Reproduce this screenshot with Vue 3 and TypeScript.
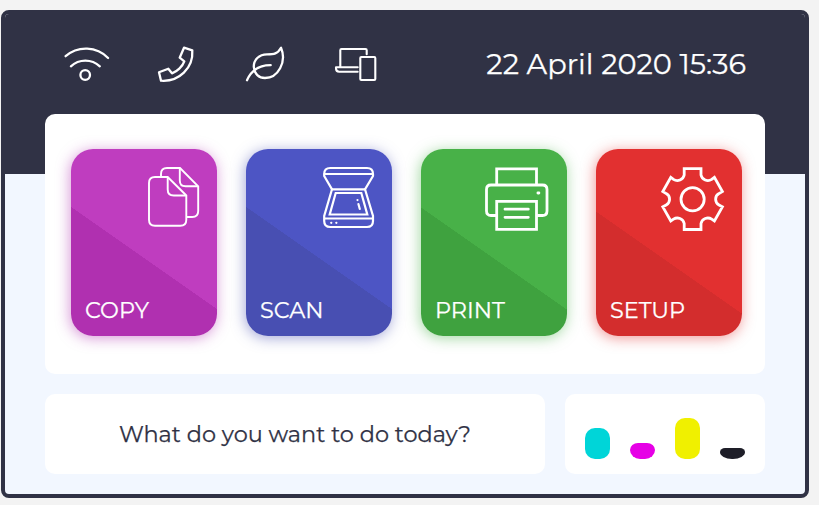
<script setup lang="ts">
interface Tile {
  id: string
  label: string
}
interface Ink {
  id: string
  level: number
}

const tiles: Tile[] = [
  { id: 'copy', label: 'COPY' },
  { id: 'scan', label: 'SCAN' },
  { id: 'print', label: 'PRINT' },
  { id: 'setup', label: 'SETUP' },
]

const inks: Ink[] = [
  { id: 'cyan', level: 31 },
  { id: 'magenta', level: 16 },
  { id: 'yellow', level: 41 },
  { id: 'black', level: 11 },
]
</script>

<template>
  <main class="printer">
    <header class="top">
      <nav class="status">
        <svg viewBox="0 0 48 48">
          <path d="M4.6 15.2A31 31 0 0 1 47.1 17M9.9 25.3A21 21 0 0 1 38.8 25.3" />
          <circle cx="24.2" cy="34" r="4.8" />
        </svg>
        <svg viewBox="0 0 48 48">
          <path d="M33 6.7L41.3 9.3C42.5 27 28 41 10 39.7L8 31.3L17.3 27.7L21 32.3C26 30.5 31.5 25.5 33.3 20.3L28.7 16.7Z" />
        </svg>
        <svg viewBox="0 0 48 48">
          <path d="M40 6.7C36.5 13 33 13.3 26 13.3C18 13.3 12.5 19 12.8 26C13.2 33 18 37 24 37C37 37 46 21 40 6.7ZM6 39.2C10 30 18 24.2 29.7 24.2" />
        </svg>
        <svg class="devices" viewBox="0 0 48 48">
          <path d="M9.3 26.3V9.2Q9.3 8 10.5 8H34.5Q35.7 8 35.7 9.2V13.2M26.7 26.3H5V27.5Q5 30.7 8.2 30.7H26.7" />
          <rect x="29.3" y="16" width="15" height="23" rx="1" />
        </svg>
      </nav>
      <time class="date">22 April 2020 15:36</time>
    </header>

    <section class="actions">
      <button v-for="tile in tiles" :key="tile.id" class="tile" :class="tile.id">
        <svg class="icon" viewBox="0 0 64 64">
          <g v-if="tile.id === 'copy'">
            <path d="M26 9.5V7Q26 1 32 1H45L63.2 19.3V44Q63.2 50 57.2 50H52" />
            <path d="M44.8 1V13.5Q44.8 19.3 50.6 19.3H63" />
            <path d="M32.7 10H20Q14 10 14 16V52.7Q14 58.8 20 58.8H45.3Q51.3 58.8 51.3 52.7V28.5Z" />
            <path d="M32.7 10V22.5Q32.7 28.5 38.7 28.5H51" />
          </g>
          <g v-else-if="tile.id === 'scan'">
            <path d="M14.2 7Q14.2 1 20.2 1H57Q63 1 63 7V9L55 22.3H22L14.2 9Z" />
            <path d="M14.5 7H62.7M22 22.3L14.2 49V54Q14.2 60 20.2 60H57Q63 60 63 54V49L55 22.3M14.3 51.5H62.9" />
            <path d="M25.7 26H51.3L57.3 47.5H19.7Z" />
            <path d="M47.5 33V33.1M48.4 37L49.8 42M21.2 55.8H21.3M26.3 55.8H26.4" />
          </g>
          <g v-else-if="tile.id === 'print'">
            <path d="M11.7 18V1.8H51.5V18M11.7 48.5H6Q1.5 48.5 1.5 44V22.5Q1.5 18 6 18H57.5Q62 18 62 22.5V44Q62 48.5 57.5 48.5H51.5" />
            <path d="M11.7 34.3H51.5V62.3H11.7Z" />
            <path class="round" d="M20 42.2H43.3M20 50.3H43.3M52.9 26H53.9" />
          </g>
          <g v-else>
            <path d="M24.2 1.6H41V8A7 7 0 0 0 51.7 12.4L54.4 10.4L62.4 24.5L59 26.6A6.5 6.5 0 0 0 59 38L62.4 39.9L54.4 54L51.7 52.2A7 7 0 0 0 41 56.5V62.5H24.2V56.5A7 7 0 0 0 13.5 52.2L10.8 54L2.8 39.9L6.2 38A6.5 6.5 0 0 0 6.2 26.6L2.8 24.5L10.8 10.4L13.5 12.4A7 7 0 0 0 24.2 8Z" />
            <circle cx="32.6" cy="32.2" r="11.6" />
          </g>
        </svg>
        <span class="label">{{ tile.label }}</span>
      </button>
    </section>

    <footer class="bottom">
      <div class="question">What do you want to do today?</div>
      <div class="inks">
        <i v-for="ink in inks" :key="ink.id" :class="ink.id" :style="{ height: ink.level + 'px' }"></i>
      </div>
    </footer>
  </main>
</template>

<style>
body {
  background: #f3f3f3;
  overflow: hidden;
}
</style>

<style scoped>
.printer {
  box-sizing: border-box;
  width: 808px;
  height: 488px;
  margin: 10px 0 0 1px;
  border: 4px solid #303245;
  border-radius: 8px;
  background: #f2f7ff;
  color: #303245;
  font-family: Montserrat, Lato, sans-serif;
  font-size: 22.4px;
  font-weight: 400;
  -webkit-text-stroke: 0.25px currentColor;
}
svg {
  display: block;
  overflow: visible;
}
.top {
  box-sizing: border-box;
  height: 160px;
  padding: 27px 59px 0 56px;
  display: flex;
  justify-content: space-between;
  align-items: flex-start;
  background: #303245;
  border-radius: 4px 4px 0 0;
}
.status {
  display: flex;
  gap: 42px;
}
.status svg {
  width: 48px;
  height: 48px;
  fill: none;
  stroke: #fff;
  stroke-width: 2.3;
  stroke-linecap: round;
  stroke-linejoin: round;
}
.status .devices {
  stroke-width: 2.1;
}
.date {
  margin-top: 3px;
  color: #fff;
  font-size: 28.8px;
  line-height: 40px;
  white-space: nowrap;
}
.actions {
  position: relative;
  box-sizing: border-box;
  width: 720px;
  height: 260px;
  margin: -60px auto 0;
  padding: 35px 0 35px 26px;
  display: flex;
  gap: 29px;
  align-items: flex-start;
  background: #fff;
  border-radius: 10px;
}
.tile {
  box-sizing: border-box;
  flex: none;
  width: 146px;
  height: 187px;
  padding: 18px 18px 11px 14px;
  border: 0;
  border-radius: 22px;
  display: flex;
  flex-direction: column;
  justify-content: space-between;
  align-items: flex-start;
  color: #fff;
  font: inherit;
}
.label {
  line-height: 30px;
}
.icon {
  align-self: flex-end;
  width: 64px;
  height: 64px;
  fill: none;
  stroke: #fff;
  stroke-width: 1.9;
}
.copy {
  background: linear-gradient(35deg, #b030b0 44.6%, #bf3dbf 44.7%);
  box-shadow: -1px 2px 14px #b030b080;
}
.scan {
  background: linear-gradient(35deg, #484fb2 44.6%, #4d55c4 44.7%);
  box-shadow: -1px 2px 14px #484fb280;
}
.print {
  background: linear-gradient(35deg, #3fa23f 44.4%, #48b148 44.5%);
  box-shadow: -1px 2px 14px #48b14880;
}
.setup {
  background: linear-gradient(35deg, #d32d2d 43%, #e23030 43.1%);
  box-shadow: -1px 2px 14px #e2303080;
}
.scan .icon {
  stroke-width: 2.2;
  stroke-linecap: round;
}
.print .icon,
.setup .icon {
  stroke-width: 2.8;
}
.round {
  stroke-linecap: round;
}
.bottom {
  display: flex;
  gap: 20px;
  padding: 20px 40px 0;
}
.question {
  width: 500px;
  height: 80px;
  line-height: 80px;
  text-align: center;
  background: #fff;
  border-radius: 10px;
}
.inks {
  box-sizing: border-box;
  width: 200px;
  height: 80px;
  padding: 0 20px 15px;
  display: flex;
  justify-content: space-between;
  align-items: flex-end;
  background: #fff;
  border-radius: 10px;
}
.inks i {
  width: 25px;
  border-radius: 10px;
}
.inks .cyan {
  background: #00d5d8;
}
.inks .magenta {
  background: #e600e6;
  border-radius: 8px 8px 10px 10px / 7px 7px 9px 9px;
}
.inks .yellow {
  background: #f0f000;
}
.inks .black {
  background: #1e1e28;
  border-radius: 5px 5px 12px 12px / 4px 4px 7px 7px;
}
</style>
